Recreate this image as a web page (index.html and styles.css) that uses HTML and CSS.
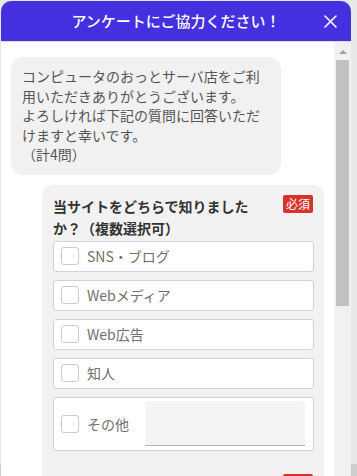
FILE: index.html
```html
<!DOCTYPE html>
<html lang="ja">
<head>
<meta charset="utf-8">
<title>アンケート</title>
<link rel="stylesheet" href="styles.css">
</head>
<body>
<div class="widget">
  <header class="head">
    <h1 class="head-title">アンケートにご協力ください！</h1>
    <button class="close" aria-label="閉じる">
      <svg width="13" height="13" viewBox="0 0 13 13"><path d="M1 1 L12 12 M12 1 L1 12" stroke="#fff" stroke-width="1.6" stroke-linecap="round" fill="none"/></svg>
    </button>
  </header>
  <div class="body">
    <div class="content">
      <div class="bubble">コンピュータのおっとサーバ店をご利用いただきありがとうございます。<br>よろしければ下記の質問に回答いただけますと幸いです。<br>（計4問）</div>
      <div class="card">
        <div class="q">
          <div class="q-head">
            <p class="q-title">当サイトをどちらで知りましたか？（複数選択可）</p>
            <span class="req">必須</span>
          </div>
          <ul class="opts">
            <li class="opt"><span class="check"></span><span class="opt-label">SNS・ブログ</span></li>
            <li class="opt"><span class="check"></span><span class="opt-label">Webメディア</span></li>
            <li class="opt"><span class="check"></span><span class="opt-label">Web広告</span></li>
            <li class="opt"><span class="check"></span><span class="opt-label">知人</span></li>
            <li class="opt opt-other"><span class="check"></span><span class="opt-label">その他</span><span class="other-input"></span></li>
          </ul>
        </div>
        <div class="q q-next">
          <div class="q-head">
            <p class="q-title">当サイトのご利用頻度を教えてください。</p>
            <span class="req">必須</span>
          </div>
        </div>
      </div>
    </div>
    <div class="scrollbar"><span class="arrow"></span><span class="thumb"></span></div>
  </div>
</div>
</body>
</html>
```
FILE: styles.css
```css
* { box-sizing: border-box; }
html, body { margin: 0; height: 476px; overflow: hidden; }
body {
  background: linear-gradient(to bottom, #e8e8e8 464px, #cdcdcd 464px);
  font-family: "Noto Sans CJK JP", "Noto Sans", sans-serif;
}
.widget {
  margin: 1px 0 0 1px;
  width: 350px;
  height: 475px;
  display: flex;
  flex-direction: column;
  background: #fff;
  border-radius: 10px 10px 0 0;
  overflow: hidden;
}
.head {
  height: 41px;
  flex: none;
  background: #4530e0;
  border-bottom: 1px solid #dcdcdc;
  display: grid;
  grid-template-columns: 1fr auto 1fr;
  align-items: center;
  padding: 0 14px 0 14px;
}
.head-title {
  grid-column: 2;
  margin: 0;
  color: #fff;
  font-size: 15px;
  font-weight: 500;
  line-height: 20px;
  letter-spacing: 0;
}
.close {
  grid-column: 3;
  justify-self: end;
  border: 0;
  padding: 0;
  background: none;
  width: 13px;
  height: 13px;
  display: block;
}
.close svg { display: block; }
.body {
  flex: 1;
  display: flex;
  min-height: 0;
}
.content {
  flex: 1;
  overflow: hidden;
  padding-top: 15px;
}
.bubble {
  margin-left: 10px;
  width: 270px;
  padding: 10px 11px;
  background: #f1f1f1;
  border-radius: 12px;
  color: #555;
  font-size: 14px;
  line-height: 19.6px;
}
.card {
  margin: 10px 10px 0 41px;
  background: #f2f2f2;
  border-radius: 10px;
  padding: 10px 10px 10px 11px;
}
.q-head {
  display: flex;
  justify-content: space-between;
  align-items: flex-start;
  margin-bottom: 2px;
}
.q-title {
  margin: 0;
  max-width: 205px;
  font-size: 14px;
  font-weight: 700;
  line-height: 22px;
  color: #333;
}
.req {
  flex: none;
  height: 18px;
  line-height: 18px;
  padding: 0 3px;
  background: #d8322a;
  color: #fff;
  font-size: 12px;
  border-radius: 2px;
  margin-right: 1px;
}
.opts {
  list-style: none;
  margin: 0;
  padding: 0;
  display: flex;
  flex-direction: column;
  gap: 8px;
}
.opt {
  height: 31px;
  display: flex;
  align-items: center;
  gap: 8px;
  padding: 0 8px 0 7px;
  background: #fff;
  border: 1px solid #d2cfe5;
  border-radius: 3px;
}
.check {
  width: 18px;
  height: 18px;
  flex: none;
  border: 1px solid #cbc8de;
  border-radius: 3px;
  background: #fff;
}
.opt-label {
  font-size: 14px;
  color: #707070;
  line-height: 20px;
}
.opt-other {
  height: 54px;
}
.other-input {
  flex: 1;
  height: 45px;
  margin-left: 8px;
  background: #f3f4f6;
  border-bottom: 1px solid #b4b4b4;
  border-radius: 4px 4px 0 0;
}
.q-next {
  margin-top: 23px;
}
.scrollbar {
  width: 17px;
  flex: none;
  background: #f1f1f1;
  display: flex;
  flex-direction: column;
  align-items: center;
  padding-top: 8px;
}
.arrow {
  width: 0;
  height: 0;
  border-left: 4px solid transparent;
  border-right: 4px solid transparent;
  border-bottom: 4px solid #a3a3a3;
}
.thumb {
  margin-top: 6px;
  width: 13px;
  height: 246px;
  background: #c1c1c1;
}
```
